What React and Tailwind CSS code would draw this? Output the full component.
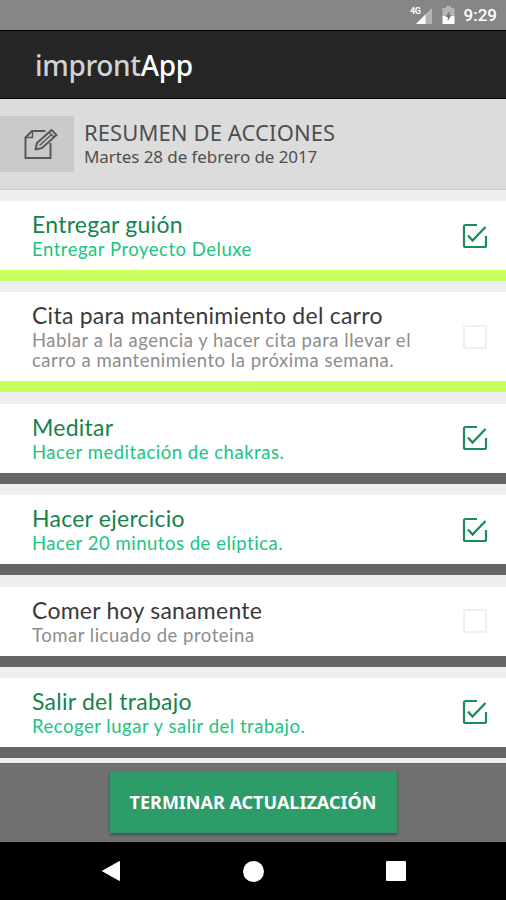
import React, { useState } from 'react';

const initialActions = [
  {
    id: 1,
    title: 'Entregar guión',
    lines: ['Entregar Proyecto Deluxe'],
    done: true,
    bar: 'bg-[#caff62]',
    height: 'h-[69px]'
  },
  {
    id: 2,
    title: 'Cita para mantenimiento del carro',
    lines: ['Hablar a la agencia y hacer cita para llevar el', 'carro a mantenimiento la próxima semana.'],
    done: false,
    bar: 'bg-[#caff62]',
    height: 'h-[89px]'
  },
  {
    id: 3,
    title: 'Meditar',
    lines: ['Hacer meditación de chakras.'],
    done: true,
    bar: 'bg-[#666666]',
    height: 'h-[69px]'
  },
  {
    id: 4,
    title: 'Hacer ejercicio',
    lines: ['Hacer 20 minutos de elíptica.'],
    done: true,
    bar: 'bg-[#666666]',
    height: 'h-[69px]'
  },
  {
    id: 5,
    title: 'Comer hoy sanamente',
    lines: ['Tomar licuado de proteina'],
    done: false,
    bar: 'bg-[#666666]',
    height: 'h-[69px]'
  },
  {
    id: 6,
    title: 'Salir del trabajo',
    lines: ['Recoger lugar y salir del trabajo.'],
    done: true,
    bar: 'bg-[#666666]',
    height: 'h-[69px]'
  }
];

const StatusBar = () => (
  <div className="flex h-[30px] shrink-0 items-center justify-end bg-[#868686] pr-[9px] font-['Roboto',sans-serif] text-white">
    <svg width="24" height="20" viewBox="0 0 24 20" className="mr-[8px]">
      <path d="M22 3v16H6z" fill="#b4b4b4" />
      <path d="M15.500 9.500V19H6z" fill="#fff" />
      <text x="0" y="9" fontSize="9" fontWeight="700" fill="#fff" letterSpacing="-0.500">4G</text>
    </svg>
    <svg width="13" height="18" viewBox="0 0 13 18" className="mr-[9px]">
      <path d="M4 0h5v2h3.500v8H.500V2H4z" fill="#b4b4b4" />
      <path d="M.500 10h12v8H.500z" fill="#fff" />
      <path d="M7.500 5 3.500 11h2.200v4l4-6H7.500z" fill="#777" />
    </svg>
    <span className="text-[17px] font-medium leading-none">9:29</span>
  </div>
);

const CheckedBox = () => (
  <svg width="26" height="26" viewBox="0 0 26 26" fill="none" stroke="#1b8f5a" strokeWidth="2.200">
    <path d="M15 2H3.500Q2 2 2 3.500V22.500Q2 24 3.500 24H22.500Q24 24 24 22.500V13" />
    <path d="M6 12.500 10.500 17.500 23.500 4" strokeWidth="2.400" />
  </svg>
);

const EditIcon = () => (
  <svg width="34" height="32" viewBox="0 0 34 32" fill="none" stroke="#585858" strokeWidth="2">
    <path d="M21.500 3H8L1.500 9.500V30H26.500V15" />
    <path d="M8.500 3V9.500H1.500" strokeWidth="1.500" />
    <path d="M11.500 21.500 13 15 27.500 2 32.500 7 18 20z" strokeLinejoin="round" />
    <path d="M25 4.500 30 9M15.500 17.500 28 6" strokeWidth="1.500" />
  </svg>
);

const ActionRow = ({ action, onToggle }) => (
  <div className="shrink-0">
    <div className={`flex items-center justify-between bg-white pl-[32px] pr-[18px] ${action.height}`}>
      <div className="pb-[2px] font-['Lato',sans-serif]">
        <h2 className={`mb-px text-[23px] leading-[28px] tracking-[0.25px] ${action.done ? 'text-[#16834a]' : 'text-[#3a3a3a]'}`}>
          {action.title}
        </h2>
        {action.lines.map((line) => (
          <p
            key={line}
            className={`whitespace-nowrap text-[18.5px] leading-[20px] tracking-[0.52px] ${action.done ? 'text-[#1cc47e]' : 'text-[#8d8d8d]'}`}
          >
            {line}
          </p>
        ))}
      </div>
      <button onClick={() => onToggle(action.id)} className="flex size-[26px] items-center justify-center">
        {action.done ? <CheckedBox /> : <span className="size-[24px] rounded-[2px] border-2 border-[#efefef]" />}
      </button>
    </div>
    <div className={`h-[11px] ${action.bar}`} />
  </div>
);

const App = () => {
  const [actions, setActions] = useState(initialActions);

  const toggle = (id) => {
    setActions(actions.map((a) => (a.id === id ? { ...a, done: !a.done } : a)));
  };

  return (
    <div className="flex h-[900px] w-[506px] flex-col overflow-hidden bg-[#efefef]">
      <StatusBar />

      <header className="flex h-[69px] shrink-0 items-center border-b border-t border-b-black border-t-black bg-[#262626] pl-[35px] font-['Noto_Sans',sans-serif] text-[28px] tracking-[-0.35px]">
        <h1 className="font-medium text-[#d2d2d2]">
          impront<span className="text-white">App</span>
        </h1>
      </header>

      <section className="flex h-[91px] shrink-0 items-center border-b border-[#cfcfcf] bg-[#dcdcdc]">
        <div className="flex h-[56px] w-[74px] items-center justify-end bg-[#cacaca] pr-[16px]">
          <EditIcon />
        </div>
        <div className="pl-[10px] font-['Noto_Sans',sans-serif] text-[#4f4f4f]">
          <h2 className="text-[22px] leading-[25px] tracking-[0.1px]">RESUMEN DE ACCIONES</h2>
          <p className="text-[17px] leading-[23px] tracking-[-0.08px]">Martes 28 de febrero de 2017</p>
        </div>
      </section>

      {/* Action list */}
      <main className="flex min-h-0 flex-1 flex-col gap-[11.4px] overflow-hidden pt-[11px]">
        {actions.map((action) => (
          <ActionRow key={action.id} action={action} onToggle={toggle} />
        ))}
      </main>

      <footer className="flex h-[79px] shrink-0 items-center justify-center border-t border-[#666] bg-[#707070] pb-[2px]">
        <button className="h-[62px] w-[287px] bg-[#2d9c69] font-['Noto_Sans',sans-serif] text-[18px] font-bold text-white shadow-[0_2px_3px_rgba(0,0,0,0.35)]">
          TERMINAR ACTUALIZACIÓN
        </button>
      </footer>

      <nav className="flex h-[58px] shrink-0 items-center justify-between bg-black px-[100px]">
        <svg width="20" height="22" viewBox="0 0 20 22" fill="#fff">
          <path d="M19.500 1.500V20.500L2.500 11z" stroke="#fff" strokeLinejoin="round" />
        </svg>
        <span className="size-[21px] rounded-full bg-white" />
        <span className="size-[20px] rounded-[1px] bg-white" />
      </nav>
    </div>
  );
};

export default App;
